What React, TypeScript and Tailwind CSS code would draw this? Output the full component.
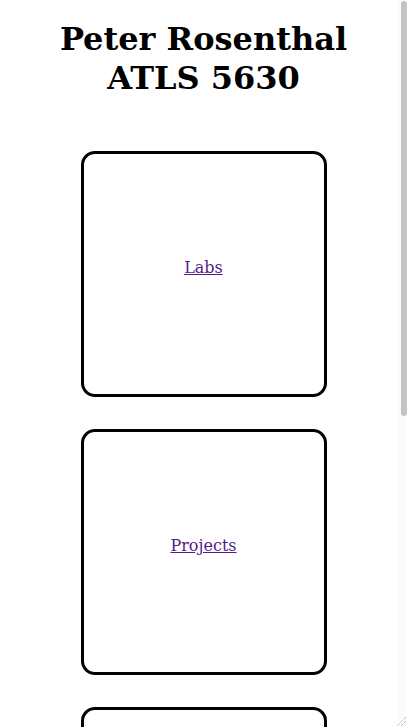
const links = ["Labs", "Projects", "Final Project", "About"];

export default function App() {
  return (
    <div className="relative h-[727px] w-[407px] overflow-hidden bg-white font-['DejaVu_Serif',serif] text-black">
      <h1 className="mx-auto my-[20px] text-center text-[32px] font-bold leading-[39px]">
        Peter Rosenthal
        <br />
        ATLS 5630
      </h1>
      <div className="flex flex-col items-center gap-[32px] pt-[33px]">
        {links.map((label) => (
          <div
            key={label}
            className="flex h-[246px] w-[246px] items-center justify-center rounded-[14px] border-[3px] border-black"
          >
            <a href="#" className="mb-[12px] text-[16px] text-[#551a8b] underline">
              {label}
            </a>
          </div>
        ))}
      </div>

      {/* scrollbar */}
      <div className="absolute right-0 top-0 h-full w-[8px] bg-[#fbfbfb]">
        <div className="ml-[2px] mt-[1px] h-[415px] w-[6px] rounded-full bg-[#c4c4c4]" />
      </div>
      {/* resize grip */}
      <svg className="absolute bottom-0 right-0" width="12" height="12" viewBox="0 0 12 12">
        <path d="M11 2 L2 11 M11 6 L6 11" stroke="#9a9a9a" strokeWidth="1" strokeDasharray="1 1" />
      </svg>
    </div>
  );
}
